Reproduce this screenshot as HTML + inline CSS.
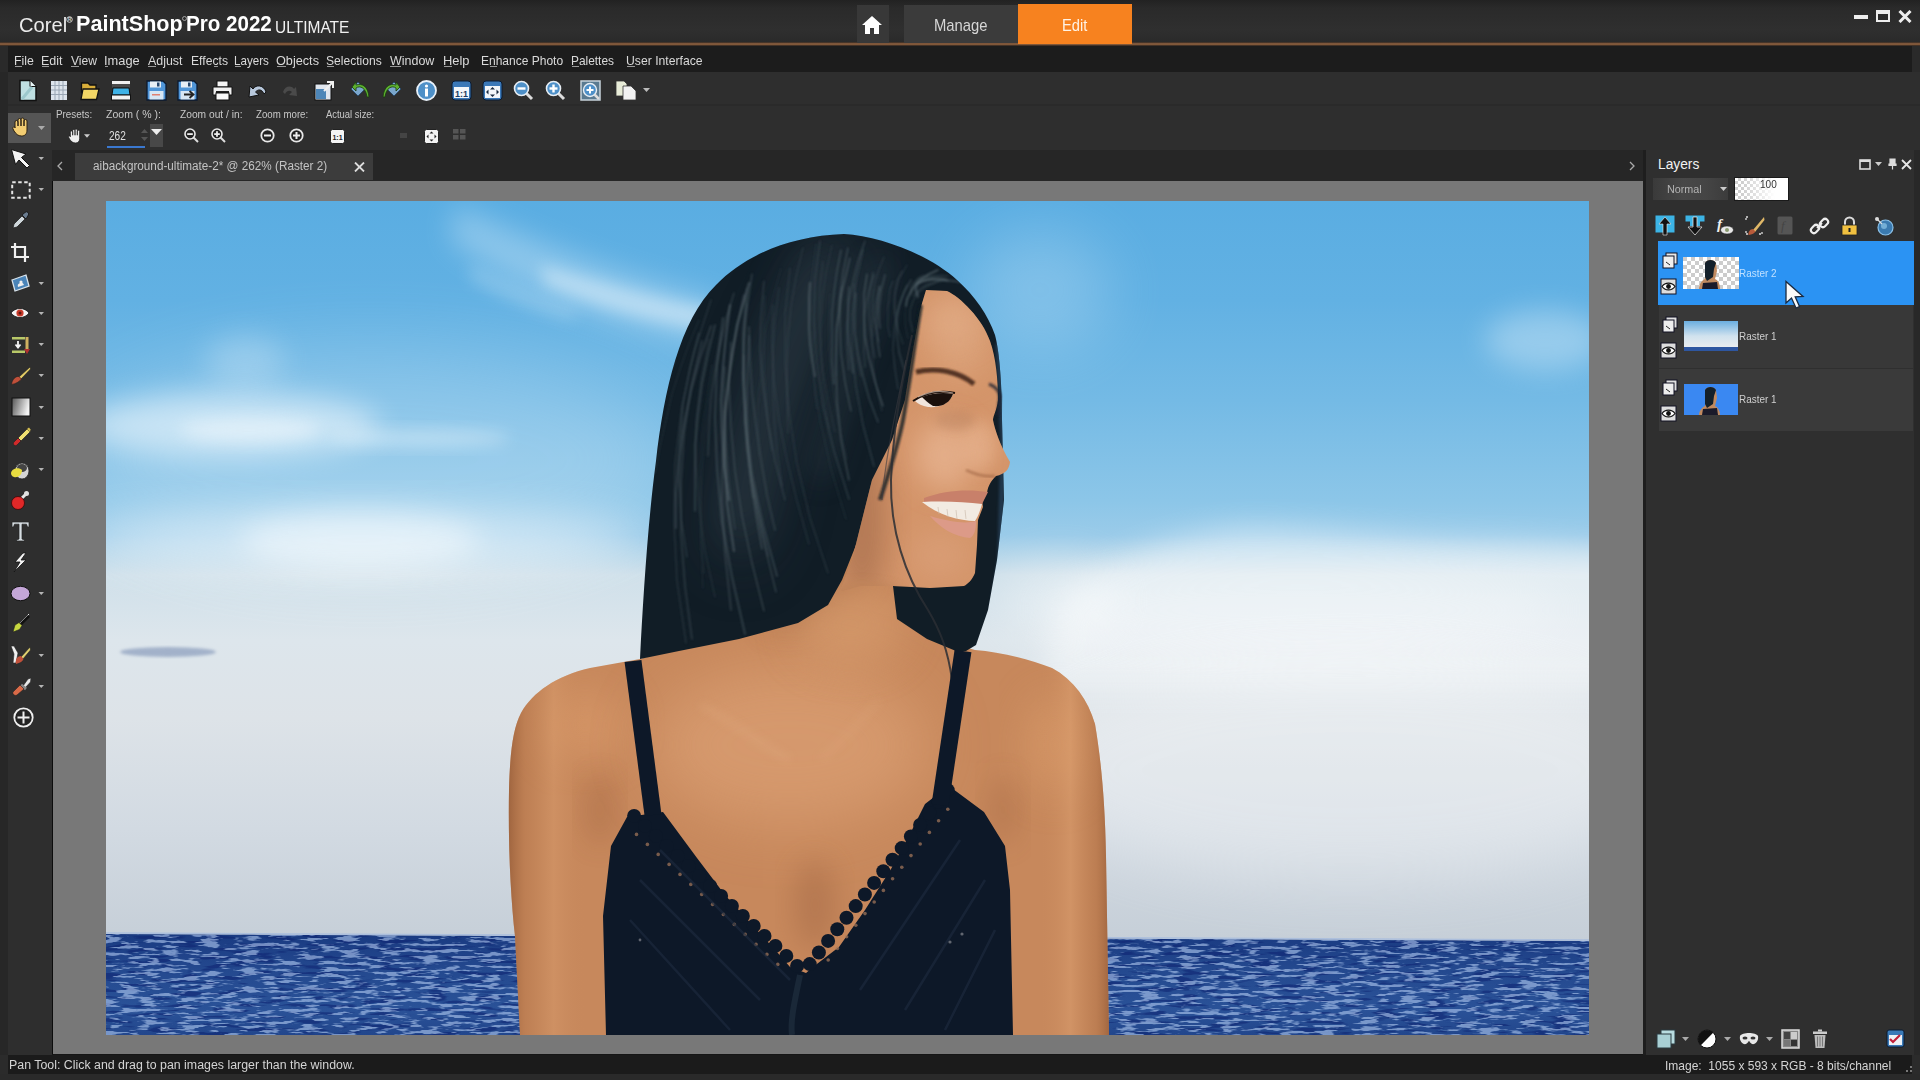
<!DOCTYPE html>
<html><head><meta charset="utf-8">
<style>
*{margin:0;padding:0;box-sizing:border-box}
html,body{width:1920px;height:1080px;overflow:hidden;background:#2b2b2b;font-family:"Liberation Sans",sans-serif;color:#ddd}
.a{position:absolute}
.t{position:absolute;white-space:pre;line-height:normal;transform-origin:0 0;font-family:"Liberation Sans",sans-serif}
#title{left:0;top:0;width:1920px;height:42px;background:linear-gradient(#222 0,#2a2a2a 8px,#2f2f2f 30px,#2a2a2a 42px)}
#oline{left:0;top:42px;width:1920px;height:4px;background:linear-gradient(#2a2420,#8e6040 45%,#7e5638 65%,#241e1c)}
#menu{left:0;top:46px;width:1920px;height:26px;background:#2a2a2a}
#menuin{left:8px;top:46px;width:1904px;height:26px;background:#1c1c1c}
#tb{left:0;top:72px;width:1920px;height:78px;background:#2e2e2e}
#tbsep{left:0;top:104px;width:1920px;height:2px;background:#2a2a2a}
#tools{left:0;top:106px;width:52px;height:949px;background:#2e2e2e}
#tabbar{left:52px;top:150px;width:1592px;height:32px;background:#262626}
#tab{left:75px;top:153px;width:298px;height:27px;background:#3c3c3c}
#canvas{left:52px;top:181px;width:1591px;height:874px;background:#787878;border-left:1px solid #0c0c0c}
#cbot{left:52px;top:1054px;width:1591px;height:2px;background:#161616}
#panel{left:1643px;top:150px;width:277px;height:905px;background:#2f2f2f;border-left:3px solid #1e1e1e}
#status{left:8px;top:1055px;width:1904px;height:19px;background:#1b1b1b}
#sbot{left:0;top:1074px;width:1920px;height:6px;background:#2a2a2a}
#photo{left:106px;top:201px;width:1483px;height:834px;overflow:hidden}

</style></head><body>
<div class="a" id="title"></div>
<div class="a" id="oline"></div>
<div class="a" id="menu"></div>
<div class="a" id="menuin"></div>
<div class="a" id="tb"></div>
<div class="a" id="tbsep"></div>
<div class="a" id="tools"></div>
<div class="a" id="tabbar"></div>
<div class="a" id="tab"></div>
<div class="a" id="canvas"></div>
<div class="a" id="cbot"></div>
<div class="a" id="panel"></div>
<div class="a" id="status"></div>
<div class="a" id="sbot"></div>
<div class="a" id="photo"><svg width="1483" height="834" viewBox="106 201 1483 834">
<defs>
<linearGradient id="sky" x1="0" y1="201" x2="0" y2="940" gradientUnits="userSpaceOnUse">
<stop offset="0" stop-color="#5aade2"/>
<stop offset="0.134" stop-color="#62b1e3"/>
<stop offset="0.27" stop-color="#74bae5"/>
<stop offset="0.405" stop-color="#8cc6e8"/>
<stop offset="0.452" stop-color="#9acbe9"/>
<stop offset="0.506" stop-color="#cfe0ea"/>
<stop offset="0.594" stop-color="#dde6ec"/>
<stop offset="0.7" stop-color="#dde3e8"/>
<stop offset="0.85" stop-color="#d2dae2"/>
<stop offset="1" stop-color="#c6cfd8"/>
</linearGradient>
<linearGradient id="seaG" x1="0" y1="935" x2="0" y2="1035" gradientUnits="userSpaceOnUse">
<stop offset="0" stop-color="#1a3b82"/>
<stop offset="0.35" stop-color="#24498f"/>
<stop offset="0.75" stop-color="#2a5298"/>
<stop offset="1" stop-color="#22468c"/>
</linearGradient>
<filter id="b4" x="-50%" y="-50%" width="200%" height="200%"><feGaussianBlur stdDeviation="4"/></filter>
<filter id="b8" x="-50%" y="-50%" width="200%" height="200%"><feGaussianBlur stdDeviation="8"/></filter>
<filter id="b14" x="-50%" y="-50%" width="200%" height="200%"><feGaussianBlur stdDeviation="14"/></filter>
<filter id="b20" x="-50%" y="-50%" width="200%" height="200%"><feGaussianBlur stdDeviation="20"/></filter>
<filter id="b40" x="-50%" y="-50%" width="200%" height="200%"><feGaussianBlur stdDeviation="40"/></filter>
<filter id="b30" x="-50%" y="-50%" width="200%" height="200%"><feGaussianBlur stdDeviation="30"/></filter>
<filter id="b2" x="-20%" y="-20%" width="140%" height="140%"><feGaussianBlur stdDeviation="1.5"/></filter>
<filter id="b1" x="-20%" y="-20%" width="140%" height="140%"><feGaussianBlur stdDeviation="0.8"/></filter>
<filter id="waves" x="0" y="0" width="100%" height="100%" color-interpolation-filters="sRGB">
<feTurbulence type="fractalNoise" baseFrequency="0.05 0.32" numOctaves="3" seed="7" result="n"/>
<feColorMatrix in="n" type="matrix" values="0 0 0 0 0.7  0 0 0 0 0.8  0 0 0 0 0.95  0 0 0 8 -4.1"/>
</filter>
<filter id="waves2" x="0" y="0" width="100%" height="100%" color-interpolation-filters="sRGB">
<feTurbulence type="fractalNoise" baseFrequency="0.04 0.25" numOctaves="2" seed="11" result="n"/>
<feColorMatrix in="n" type="matrix" values="0 0 0 0 0.06  0 0 0 0 0.15  0 0 0 0 0.45  -8 0 0 0 3.7"/>
</filter>
<filter id="hairtex" x="0" y="0" width="100%" height="100%">
<feTurbulence type="fractalNoise" baseFrequency="0.25 0.012" numOctaves="2" seed="3" result="n"/>
<feColorMatrix in="n" type="matrix" values="0 0 0 0 0.45  0 0 0 0 0.52  0 0 0 0 0.56  0 0 0 5 -2.6"/>
</filter>
<clipPath id="skinClip"><path d="M520,1035 L515,936 C511,900 508,850 509,790 C510,752 513,728 521,713 C533,692 556,676 590,668 L640,659 L740,630 L850,540 L900,540 L900,600 L940,640 L975,650 C1000,652 1030,659 1052,668 C1074,680 1088,700 1095,724 C1101,760 1105,800 1106,856 L1109,1035 Z"/></clipPath>
<clipPath id="hairClip"><path d="M844,234 C880,236 930,255 957,280 C975,296 988,315 995,335 C999,350 1002,380 1002,420 L1004,500 L997,560 L988,610 L976,645 L966,651 L956,651 L927,639 L897,619 L893,586 L856,545 L842,580 L828,605 L798,623 L739,639 L679,651 L640,659 C643,600 648,520 656,461 C664,390 680,320 716,285 C745,255 790,236 844,234 Z"/></clipPath>
<clipPath id="faceClip"><path d="M926,290 L947,291 C960,297 982,318 990,341 C996,358 998,380 998,400 C997,410 993,416 993,420 C995,430 1000,445 1010,462 C1009,470 1005,474 996,476 C992,480 988,485 987,493 L982,500 L983,507 L978,520 L977,545 L975,573 C972,580 968,584 964,586 L930,588 L893,586 L860,586 L840,592 L852,560 L862,520 L872,480 L892,440 L905,400 L913,350 L920,310 Z"/></clipPath>
<clipPath id="topClip"><path d="M611,846 L627,817 L663,812 L697,858 L725,895 L756,929 L777,952 L790,967 L806,973 L813,967 L839,947 L865,910 L891,869 L912,830 L925,804 L938,794 L953,789 L984,812 L1005,846 L1010,890 L1013,1035 L606,1035 L603,916 Z"/></clipPath>
<linearGradient id="hmg" x1="0" y1="180" x2="0" y2="740" gradientUnits="userSpaceOnUse"><stop offset="0" stop-color="#fff"/><stop offset="0.45" stop-color="#fff"/><stop offset="0.8" stop-color="#444"/><stop offset="1" stop-color="#222"/></linearGradient>
<mask id="hairMask" maskUnits="userSpaceOnUse" x="500" y="150" width="640" height="640"><rect x="500" y="150" width="640" height="640" fill="url(#hmg)"/></mask>
<linearGradient id="armLG" x1="506" y1="0" x2="612" y2="0" gradientUnits="userSpaceOnUse"><stop offset="0" stop-color="#8a5230" stop-opacity="0.75"/><stop offset="0.18" stop-color="#a86a40" stop-opacity="0.3"/><stop offset="0.45" stop-color="#dca070" stop-opacity="0.35"/><stop offset="0.75" stop-color="#c8885a" stop-opacity="0"/><stop offset="1" stop-color="#9a6040" stop-opacity="0"/></linearGradient>
<linearGradient id="armRG" x1="1008" y1="0" x2="1112" y2="0" gradientUnits="userSpaceOnUse"><stop offset="0" stop-color="#9a6040" stop-opacity="0"/><stop offset="0.3" stop-color="#c8885a" stop-opacity="0"/><stop offset="0.6" stop-color="#e0a474" stop-opacity="0.4"/><stop offset="0.85" stop-color="#a86a40" stop-opacity="0.35"/><stop offset="1" stop-color="#8a5230" stop-opacity="0.75"/></linearGradient>
<clipPath id="seaClip"><path d="M106,934 L1589,941 L1589,1035 L106,1035 Z"/></clipPath>
<clipPath id="photoClip"><rect x="106" y="201" width="1483" height="834"/></clipPath>
</defs>
<rect x="106" y="201" width="1483" height="834" fill="url(#sky)"/>
<!-- clouds -->
<g fill="#ffffff">
<path d="M455,205 C520,235 600,270 720,300 L715,345 C620,330 530,300 450,240 Z" opacity="0.28" filter="url(#b14)"/>
<path d="M540,265 C600,282 660,300 720,310 L712,330 C650,322 590,305 545,285 Z" opacity="0.38" filter="url(#b8)"/><path d="M470,265 C510,285 550,300 580,312 L570,320 C530,310 495,295 470,280 Z" opacity="0.2" filter="url(#b8)"/>
<ellipse cx="370" cy="460" rx="300" ry="110" opacity="0.18" filter="url(#b40)"/>
<ellipse cx="230" cy="425" rx="150" ry="32" opacity="0.5" filter="url(#b14)"/>
<ellipse cx="360" cy="540" rx="120" ry="28" opacity="0.45" filter="url(#b14)"/>
<ellipse cx="250" cy="430" rx="70" ry="12" opacity="0.4" filter="url(#b8)"/>
<ellipse cx="420" cy="438" rx="90" ry="9" opacity="0.35" filter="url(#b8)"/>
<ellipse cx="245" cy="360" rx="40" ry="25" opacity="0.22" filter="url(#b14)"/>
<ellipse cx="1040" cy="290" rx="70" ry="60" opacity="0.2" filter="url(#b30)"/>
<ellipse cx="1545" cy="340" rx="60" ry="30" opacity="0.3" filter="url(#b14)"/>
<path d="M1060,600 C1100,560 1170,532 1250,526 C1330,528 1400,538 1470,540 C1520,540 1560,545 1620,548 L1620,690 L1040,690 Z" opacity="0.42" filter="url(#b14)"/>
<ellipse cx="1300" cy="610" rx="260" ry="40" opacity="0.25" filter="url(#b20)"/>
<ellipse cx="360" cy="540" rx="280" ry="30" opacity="0.45" filter="url(#b20)"/>
<ellipse cx="1060" cy="600" rx="60" ry="40" opacity="0.3" filter="url(#b20)"/>
</g>

<ellipse cx="1350" cy="770" rx="320" ry="110" fill="#fff" opacity="0.3" filter="url(#b30)"/>
<ellipse cx="168" cy="652" rx="48" ry="5" fill="#8a9cbc" opacity="0.7" filter="url(#b2)"/>
<!-- sea -->
<path d="M106,934 L1589,941 L1589,1035 L106,1035 Z" fill="url(#seaG)"/>
<path d="M106,934 L1589,941 L1589,1035 L106,1035 Z" fill="#fff" filter="url(#waves2)" opacity="0.6" clip-path="url(#seaClip)"/><path d="M106,934 L1589,941 L1589,1035 L106,1035 Z" fill="#fff" filter="url(#waves)" opacity="0.6" clip-path="url(#seaClip)"/>
<path d="M106,933 L1589,940" stroke="#9ab4e0" stroke-width="1.5" opacity="0.6"/>
<!-- skin body -->
<path d="M520,1035 L515,936 C511,900 508,850 509,790 C510,752 513,728 521,713 C533,692 556,676 590,668 L640,659 L740,630 L850,540 L900,540 L900,600 L940,640 L975,650 C1000,652 1030,659 1052,668 C1074,680 1088,700 1095,724 C1101,760 1105,800 1106,856 L1109,1035 Z" fill="#c7885c"/>
<g clip-path="url(#skinClip)">
<ellipse cx="585" cy="725" rx="40" ry="35" fill="#dc9c6c" opacity="0.6" filter="url(#b20)"/>
<ellipse cx="1055" cy="745" rx="28" ry="50" fill="#dc9e6c" opacity="0.6" filter="url(#b20)"/>
<rect x="500" y="600" width="112" height="440" fill="url(#armLG)"/>
<rect x="1008" y="600" width="112" height="440" fill="url(#armRG)"/>
<path d="M850,545 L760,628 L800,630 L870,580 Z" fill="#9a6440" opacity="0.4" filter="url(#b14)"/>
<ellipse cx="790" cy="745" rx="140" ry="80" fill="#dca074" opacity="0.7" filter="url(#b30)"/><ellipse cx="850" cy="625" rx="55" ry="40" fill="#d89e70" opacity="0.6" filter="url(#b20)"/>
<ellipse cx="600" cy="810" rx="14" ry="35" fill="#8a5030" opacity="0.28" filter="url(#b14)"/>
<ellipse cx="1003" cy="810" rx="14" ry="35" fill="#8a5030" opacity="0.25" filter="url(#b14)"/>
<path d="M700,705 C735,722 760,745 790,760" stroke="#e8b890" stroke-width="8" opacity="0.18" filter="url(#b4)" fill="none"/>
<path d="M880,700 C860,720 840,745 820,760" stroke="#e8b890" stroke-width="8" opacity="0.12" filter="url(#b4)" fill="none"/>
<ellipse cx="815" cy="905" rx="20" ry="45" fill="#9a6040" opacity="0.4" filter="url(#b14)"/>
</g>
<!-- hair -->
<path d="M844,234 C880,236 930,255 957,280 C975,296 988,315 995,335 C999,350 1002,380 1002,420 L1004,500 L997,560 L988,610 L976,645 L966,651 L956,651 L927,639 L897,619 L893,586 L856,545 L842,580 L828,605 L798,623 L739,639 L679,651 L640,659 C643,600 648,520 656,461 C664,390 680,320 716,285 C745,255 790,236 844,234 Z" fill="#111d26"/>
<g clip-path="url(#hairClip)" fill="none" stroke-linecap="round">
<path d="M820,260 C790,330 760,420 740,520" stroke="#3a4a52" stroke-width="40" opacity="0.35" filter="url(#b20)"/>
<path d="M880,270 C860,330 840,400 820,470" stroke="#3a4a52" stroke-width="25" opacity="0.3" filter="url(#b14)"/>
<path d="M850,260 C800,320 760,420 740,540" stroke="#3a4a54" stroke-width="60" opacity="0.3" filter="url(#b30)" fill="none"/>
<g filter="url(#b1)"><path d="M856,293 L855,313 L855,333 L858,354 L863,376 L869,398 L878,422" stroke="#4a5a62" stroke-width="1.6" opacity="0.52"/><path d="M744,295 L734,343 L727,394 L723,445 L722,499 L725,553 L731,610" stroke="#6a7a80" stroke-width="2" opacity="0.29"/><path d="M752,274 L745,322 L743,373 L745,425 L751,479 L762,534 L776,592" stroke="#6a7a80" stroke-width="1" opacity="0.52"/><path d="M711,300 L694,352 L682,406 L675,463 L674,521 L677,581 L686,643" stroke="#4a5a62" stroke-width="1" opacity="0.52"/><path d="M948,280 L940,281 L933,283 L926,285 L921,288 L917,292 L914,296" stroke="#5a6a72" stroke-width="1" opacity="0.58"/><path d="M884,257 L879,269 L875,282 L873,296 L873,311 L875,326 L879,342" stroke="#5a6a72" stroke-width="1" opacity="0.34"/><path d="M773,305 L772,343 L774,381 L779,420 L787,460 L797,501 L809,544" stroke="#4a5a62" stroke-width="1.2" opacity="0.37"/><path d="M765,296 L764,321 L764,346 L764,372 L766,398 L768,424 L772,451" stroke="#3a4a52" stroke-width="0.8" opacity="0.58"/><path d="M779,288 L775,319 L773,351 L773,384 L774,417 L777,451 L782,486" stroke="#4a5a62" stroke-width="1.6" opacity="0.27"/><path d="M731,342 L729,384 L731,427 L735,471 L742,516 L752,563 L764,611" stroke="#6a7a80" stroke-width="1.2" opacity="0.43"/><path d="M928,277 L919,284 L912,293 L907,302 L905,313 L905,325 L908,338" stroke="#3a4a52" stroke-width="1.2" opacity="0.26"/><path d="M937,282 L926,287 L918,293 L913,301 L910,310 L910,320 L913,332" stroke="#3a4a52" stroke-width="1.2" opacity="0.57"/><path d="M841,250 L837,271 L834,292 L832,314 L832,337 L832,360 L834,384" stroke="#5a6a72" stroke-width="1.2" opacity="0.60"/><path d="M711,326 L700,358 L691,391 L684,424 L679,458 L676,493 L676,528" stroke="#5a6a72" stroke-width="2" opacity="0.37"/><path d="M744,355 L744,385 L745,417 L747,449 L751,481 L756,515 L762,549" stroke="#6a7a80" stroke-width="1.2" opacity="0.54"/><path d="M709,339 L701,379 L696,421 L696,463 L699,507 L705,551 L715,597" stroke="#4a5a62" stroke-width="1" opacity="0.40"/><path d="M723,318 L717,366 L715,417 L717,468 L722,522 L732,577 L745,634" stroke="#5a6a72" stroke-width="2" opacity="0.41"/><path d="M823,261 L820,287 L819,315 L820,343 L823,371 L828,401 L835,432" stroke="#5a6a72" stroke-width="0.8" opacity="0.38"/><path d="M948,281 L940,280 L933,280 L927,281 L923,282 L919,283 L917,286" stroke="#4a5a62" stroke-width="1.6" opacity="0.35"/><path d="M902,271 L897,281 L895,291 L894,303 L895,316 L898,329 L903,344" stroke="#4a5a62" stroke-width="1.2" opacity="0.38"/><path d="M879,286 L875,305 L872,325 L872,345 L873,366 L877,389 L882,411" stroke="#3a4a52" stroke-width="1.2" opacity="0.48"/><path d="M850,258 L842,292 L837,327 L836,363 L837,401 L841,440 L849,480" stroke="#6a7a80" stroke-width="1.2" opacity="0.54"/><path d="M867,274 L864,294 L864,314 L865,336 L869,358 L875,382 L883,406" stroke="#6a7a80" stroke-width="1.2" opacity="0.57"/><path d="M730,305 L726,336 L723,367 L721,400 L722,432 L724,466 L729,500" stroke="#5a6a72" stroke-width="2" opacity="0.59"/><path d="M734,293 L726,319 L720,346 L715,373 L711,400 L709,428 L708,456" stroke="#6a7a80" stroke-width="1" opacity="0.47"/><path d="M944,275 L934,275 L925,277 L919,279 L914,283 L912,287 L912,293" stroke="#3a4a52" stroke-width="0.8" opacity="0.32"/><path d="M849,287 L848,301 L848,315 L848,329 L849,343 L851,358 L853,373" stroke="#4a5a62" stroke-width="1.6" opacity="0.59"/><path d="M725,367 L724,393 L724,419 L726,446 L728,473 L731,501 L735,529" stroke="#4a5a62" stroke-width="1.6" opacity="0.41"/><path d="M790,268 L785,314 L785,362 L789,412 L797,464 L810,518 L828,573" stroke="#4a5a62" stroke-width="1.2" opacity="0.39"/><path d="M749,336 L748,362 L747,388 L747,415 L748,442 L750,470 L753,497" stroke="#4a5a62" stroke-width="2" opacity="0.46"/><path d="M702,341 L691,387 L684,434 L681,483 L681,534 L685,586 L692,639" stroke="#5a6a72" stroke-width="1.6" opacity="0.39"/><path d="M848,248 L843,273 L840,299 L840,325 L841,353 L845,382 L851,411" stroke="#6a7a80" stroke-width="1" opacity="0.59"/><path d="M865,241 L858,261 L853,281 L849,302 L847,324 L847,347 L849,370" stroke="#5a6a72" stroke-width="1.2" opacity="0.47"/><path d="M938,270 L929,274 L921,279 L915,285 L911,291 L907,299 L906,306" stroke="#6a7a80" stroke-width="1.6" opacity="0.59"/><path d="M924,275 L919,277 L916,280 L913,283 L911,286 L911,290 L911,295" stroke="#6a7a80" stroke-width="0.8" opacity="0.36"/><path d="M948,281 L941,280 L935,280 L930,280 L926,280 L922,281 L920,283" stroke="#6a7a80" stroke-width="1" opacity="0.35"/><path d="M907,265 L903,272 L899,279 L897,287 L895,296 L895,305 L895,314" stroke="#6a7a80" stroke-width="0.8" opacity="0.34"/><path d="M749,283 L737,325 L730,368 L725,412 L725,457 L727,503 L734,551" stroke="#6a7a80" stroke-width="2" opacity="0.48"/><path d="M854,284 L854,298 L853,313 L854,328 L856,344 L858,360 L861,376" stroke="#3a4a52" stroke-width="2" opacity="0.35"/><path d="M830,294 L829,320 L829,346 L831,373 L835,401 L840,430 L847,459" stroke="#4a5a62" stroke-width="0.8" opacity="0.34"/><path d="M810,283 L809,298 L809,313 L809,328 L810,344 L812,360 L815,376" stroke="#6a7a80" stroke-width="2" opacity="0.45"/><path d="M880,286 L878,297 L877,308 L876,320 L877,332 L878,344 L880,357" stroke="#6a7a80" stroke-width="1" opacity="0.56"/><path d="M820,241 L815,279 L814,320 L817,362 L823,406 L834,451 L849,499" stroke="#3a4a52" stroke-width="1.6" opacity="0.57"/><path d="M715,325 L708,354 L702,384 L698,415 L695,446 L695,478 L695,511" stroke="#5a6a72" stroke-width="1.6" opacity="0.46"/><path d="M907,285 L901,300 L896,316 L894,333 L893,350 L895,369 L898,389" stroke="#4a5a62" stroke-width="1.2" opacity="0.50"/><path d="M961,282 L945,280 L932,279 L923,281 L917,284 L916,289 L918,296" stroke="#5a6a72" stroke-width="2" opacity="0.48"/><path d="M948,276 L935,276 L925,277 L918,279 L915,284 L915,290 L918,298" stroke="#5a6a72" stroke-width="1" opacity="0.46"/><path d="M803,248 L796,277 L791,307 L788,338 L787,369 L787,401 L788,433" stroke="#6a7a80" stroke-width="0.8" opacity="0.35"/><path d="M841,287 L839,301 L838,315 L836,330 L836,345 L836,360 L836,376" stroke="#4a5a62" stroke-width="1.2" opacity="0.49"/><path d="M814,318 L814,333 L813,347 L814,363 L814,378 L815,393 L817,409" stroke="#3a4a52" stroke-width="1" opacity="0.45"/><path d="M874,275 L869,290 L866,304 L864,319 L864,335 L864,351 L865,367" stroke="#4a5a62" stroke-width="2" opacity="0.33"/><path d="M911,280 L904,292 L899,306 L897,320 L897,335 L899,352 L904,369" stroke="#6a7a80" stroke-width="1.6" opacity="0.31"/><path d="M885,275 L883,283 L881,291 L880,300 L879,309 L879,319 L880,328" stroke="#4a5a62" stroke-width="2" opacity="0.46"/><path d="M747,289 L743,333 L743,379 L746,426 L752,475 L763,525 L777,576" stroke="#4a5a62" stroke-width="2" opacity="0.50"/><path d="M675,360 L666,383 L657,407 L650,432 L644,456 L640,481 L636,507" stroke="#4a5a62" stroke-width="0.8" opacity="0.59"/><path d="M873,272 L871,285 L869,299 L869,313 L870,327 L872,342 L875,358" stroke="#5a6a72" stroke-width="1.2" opacity="0.37"/><path d="M863,250 L856,281 L852,315 L852,350 L856,387 L863,425 L874,466" stroke="#3a4a52" stroke-width="1.6" opacity="0.59"/><path d="M781,268 L773,298 L766,328 L762,359 L759,391 L758,423 L759,456" stroke="#4a5a62" stroke-width="0.8" opacity="0.26"/><path d="M712,365 L707,398 L702,431 L700,466 L700,501 L701,537 L704,573" stroke="#3a4a52" stroke-width="0.8" opacity="0.40"/><path d="M764,281 L761,315 L760,350 L763,386 L768,423 L775,461 L785,500" stroke="#5a6a72" stroke-width="1" opacity="0.48"/><path d="M699,333 L690,368 L683,404 L680,441 L679,479 L681,518 L687,557" stroke="#4a5a62" stroke-width="1.2" opacity="0.54"/><path d="M893,281 L890,289 L889,298 L888,307 L888,317 L888,327 L890,337" stroke="#3a4a52" stroke-width="1.2" opacity="0.58"/><path d="M874,289 L873,296 L872,304 L872,312 L872,320 L872,328 L873,336" stroke="#3a4a52" stroke-width="1.2" opacity="0.41"/><path d="M749,327 L750,359 L752,392 L756,425 L761,460 L767,495 L775,530" stroke="#4a5a62" stroke-width="2" opacity="0.39"/><path d="M946,279 L939,278 L932,278 L926,279 L922,280 L919,282 L917,284" stroke="#6a7a80" stroke-width="1" opacity="0.52"/><path d="M721,331 L713,372 L707,413 L703,455 L701,498 L701,542 L703,588" stroke="#3a4a52" stroke-width="0.8" opacity="0.41"/><path d="M816,244 L811,285 L810,328 L813,373 L820,420 L831,469 L846,519" stroke="#3a4a52" stroke-width="0.8" opacity="0.50"/><path d="M747,304 L744,343 L744,384 L747,425 L751,468 L758,511 L768,556" stroke="#4a5a62" stroke-width="1.6" opacity="0.39"/><path d="M699,320 L689,344 L680,369 L672,394 L666,420 L660,446 L655,473" stroke="#4a5a62" stroke-width="1" opacity="0.31"/><path d="M832,245 L826,273 L822,302 L821,332 L821,363 L824,395 L829,428" stroke="#4a5a62" stroke-width="0.8" opacity="0.44"/></g>
<path d="M998,345 L1003,440 L1000,560 L988,640" stroke="#35587a" stroke-width="5" opacity="0.5" filter="url(#b2)"/>
</g>
<!-- face -->
<path d="M926,290 L947,291 C960,297 982,318 990,341 C996,358 998,380 998,400 C997,410 993,416 993,420 C995,430 1000,445 1010,462 C1009,470 1005,474 996,476 C992,480 988,485 987,493 L982,500 L983,507 L978,520 L977,545 L975,573 C972,580 968,584 964,586 L930,588 L893,586 L860,586 L840,592 L852,560 L862,520 L872,480 L892,440 L905,400 L913,350 L920,310 Z" fill="#d4956a"/>
<g clip-path="url(#faceClip)">
<ellipse cx="960" cy="340" rx="30" ry="40" fill="#e0aa84" opacity="0.55" filter="url(#b14)"/>
<ellipse cx="980" cy="445" rx="18" ry="25" fill="#e8b490" opacity="0.6" filter="url(#b8)"/>
<ellipse cx="862" cy="520" rx="25" ry="80" fill="#9a6444" opacity="0.55" filter="url(#b14)"/><ellipse cx="945" cy="455" rx="30" ry="35" fill="#eab896" opacity="0.7" filter="url(#b14)"/><ellipse cx="950" cy="320" rx="30" ry="25" fill="#e4b08c" opacity="0.5" filter="url(#b14)"/>
<ellipse cx="940" cy="555" rx="30" ry="25" fill="#dea682" opacity="0.45" filter="url(#b14)"/>
<ellipse cx="955" cy="420" rx="20" ry="10" fill="#b07a5a" opacity="0.3" filter="url(#b4)"/><ellipse cx="862" cy="592" rx="40" ry="10" fill="#bf845a" opacity="0.9" filter="url(#b4)"/>
</g>
<!-- brow, eye -->
<path d="M916,372 C935,367 958,371 974,384" stroke="#3e2216" stroke-width="5" fill="none" opacity="0.85" filter="url(#b1)"/>
<path d="M915,401 C925,394 940,391 953,394 C950,403 940,408 928,407 C922,406 918,404 915,401 Z" fill="#f0e4dc"/><path d="M922,397 C932,393 944,392 953,394 C950,403 942,407 933,406 C928,403 925,400 922,397 Z" fill="#1a100c"/><path d="M913,401 C925,393 940,390 955,393" stroke="#1a100c" stroke-width="2" fill="none"/>
<path d="M918,397 C930,391 942,390 953,393" stroke="#f0d8c8" stroke-width="1.2" opacity="0.6" fill="none"/>
<path d="M989,384 C994,386 999,390 1000,396 L998,416" stroke="#1e2430" stroke-width="3.5" fill="none" opacity="0.75" filter="url(#b1)"/>
<!-- nose -->
<path d="M966,470 C976,475 986,477 995,476" stroke="#9a6040" stroke-width="3" fill="none" opacity="0.55" filter="url(#b1)"/>
<!-- mouth -->
<path d="M924,498 C945,490 968,489 988,492 C985,498 983,502 982,504 C960,502 940,503 924,503 Z" fill="#c8806a"/>
<path d="M922,502 C945,501 965,502 982,504 C980,512 977,518 975,521 C960,521 938,515 922,502 Z" fill="#f2ebe2"/>
<path d="M930,516 C950,522 966,524 976,521 C976,530 974,536 970,538 C955,537 940,528 930,516 Z" fill="#dc9a88"/>
<path d="M938,507 L939,514 M947,509 L948,517 M956,510 L957,519 M965,510 L966,519" stroke="#c8b8a8" stroke-width="1" opacity="0.6"/>
<!-- hair strands over face -->
<path d="M921,305 C915,340 910,380 903,420 C897,450 888,475 880,500" stroke="#101c24" stroke-width="4" fill="none" opacity="0.8" filter="url(#b1)"/>
<path d="M912,335 C902,380 893,430 891,480 C890,530 905,575 928,610 C940,630 948,650 952,680" stroke="#2a2e34" stroke-width="2" fill="none" opacity="0.85"/>
<path d="M906,360 C896,410 885,460 882,500" stroke="#3a3a40" stroke-width="1.2" fill="none" opacity="0.6"/>
<!-- top -->
<path d="M611,846 L627,817 L663,812 L697,858 L725,895 L756,929 L777,952 L790,967 L806,973 L813,967 L839,947 L865,910 L891,869 L912,830 L925,804 L938,794 L953,789 L984,812 L1005,846 L1010,890 L1013,1035 L606,1035 L603,916 Z" fill="#0d1828"/>
<g fill="#0d1828"><circle cx="634.1" cy="815.9" r="7"/><circle cx="645.0" cy="825.9" r="7"/><circle cx="655.9" cy="835.9" r="7"/><circle cx="666.7" cy="845.9" r="7"/><circle cx="677.6" cy="855.9" r="7"/><circle cx="688.5" cy="865.9" r="7"/><circle cx="699.3" cy="875.9" r="7"/><circle cx="710.2" cy="885.9" r="7"/><circle cx="721.1" cy="895.9" r="7"/><circle cx="731.9" cy="905.9" r="7"/><circle cx="742.8" cy="915.9" r="7"/><circle cx="753.7" cy="925.9" r="7"/><circle cx="764.5" cy="935.9" r="7"/><circle cx="775.4" cy="945.9" r="7"/><circle cx="786.3" cy="955.9" r="7"/><circle cx="797.1" cy="965.9" r="7"/><circle cx="947.7" cy="790.1" r="7"/><circle cx="938.5" cy="801.7" r="7"/><circle cx="929.3" cy="813.3" r="7"/><circle cx="920.1" cy="824.9" r="7"/><circle cx="910.9" cy="836.5" r="7"/><circle cx="901.7" cy="848.1" r="7"/><circle cx="892.5" cy="859.7" r="7"/><circle cx="883.3" cy="871.3" r="7"/><circle cx="874.1" cy="882.9" r="7"/><circle cx="864.9" cy="894.5" r="7"/><circle cx="855.7" cy="906.1" r="7"/><circle cx="846.5" cy="917.7" r="7"/><circle cx="837.3" cy="929.3" r="7"/><circle cx="828.1" cy="940.9" r="7"/><circle cx="818.9" cy="952.5" r="7"/><circle cx="809.7" cy="964.1" r="7"/></g><g fill="#a87a5c" opacity="0.7"><circle cx="636.5" cy="834.4" r="1.8"/><circle cx="647.4" cy="844.4" r="1.8"/><circle cx="658.2" cy="854.4" r="1.8"/><circle cx="669.1" cy="864.4" r="1.8"/><circle cx="680.0" cy="874.4" r="1.8"/><circle cx="690.8" cy="884.4" r="1.8"/><circle cx="701.7" cy="894.4" r="1.8"/><circle cx="712.6" cy="904.4" r="1.8"/><circle cx="723.4" cy="914.4" r="1.8"/><circle cx="734.3" cy="924.4" r="1.8"/><circle cx="745.2" cy="934.4" r="1.8"/><circle cx="756.0" cy="944.4" r="1.8"/><circle cx="766.9" cy="954.4" r="1.8"/><circle cx="777.8" cy="964.4" r="1.8"/><circle cx="947.8" cy="809.2" r="1.8"/><circle cx="938.6" cy="820.8" r="1.8"/><circle cx="929.4" cy="832.4" r="1.8"/><circle cx="920.2" cy="844.0" r="1.8"/><circle cx="911.0" cy="855.6" r="1.8"/><circle cx="901.8" cy="867.2" r="1.8"/><circle cx="892.6" cy="878.8" r="1.8"/><circle cx="883.4" cy="890.4" r="1.8"/><circle cx="874.2" cy="902.0" r="1.8"/><circle cx="865.0" cy="913.6" r="1.8"/><circle cx="855.8" cy="925.2" r="1.8"/><circle cx="846.6" cy="936.8" r="1.8"/><circle cx="837.4" cy="948.4" r="1.8"/><circle cx="828.2" cy="960.0" r="1.8"/></g>
<g clip-path="url(#topClip)" fill="none">
<path d="M640,880 L760,1000 M630,920 L730,1030 M660,850 L790,980" stroke="#1e2c40" stroke-width="2.5" opacity="0.6"/>
<path d="M960,840 L860,990 M985,880 L905,1010 M995,930 L945,1030" stroke="#1e2c40" stroke-width="2.5" opacity="0.6"/>
</g>
<g fill="#9a9aa0" opacity="0.6"><circle cx="962" cy="934" r="1.6"/><circle cx="950" cy="942" r="1.6"/><circle cx="640" cy="940" r="1.4"/></g>
<path d="M633,661 L653,815" stroke="#0d1828" stroke-width="17"/>
<path d="M963,651 L940,805" stroke="#0d1828" stroke-width="17"/>
<path d="M800,975 C795,1000 790,1020 792,1035" stroke="#1a2838" stroke-width="6" fill="none"/>
</svg>
</div>
<!-- top nav tabs -->
<div class="a" style="left:857px;top:5px;width:32px;height:38px;background:#383838"></div>
<div class="a" style="left:904px;top:5px;width:114px;height:38px;background:#3b3b3b"></div>
<div class="a" style="left:1018px;top:4px;width:114px;height:40px;background:#f7821f"></div>
<svg class="a" style="left:861px;top:14px" width="22" height="22" viewBox="0 0 22 22"><path d="M11 2 L21 11 L18 11 L18 20 L13 20 L13 14 L9 14 L9 20 L4 20 L4 11 L1 11 Z" fill="#fff"/></svg>
<!-- window controls -->
<div class="a" style="left:1854px;top:15px;width:14px;height:4px;background:#eee"></div>
<div class="a" style="left:1876px;top:10px;width:14px;height:12px;border:2px solid #eee;border-top-width:4px"></div>
<svg class="a" style="left:1898px;top:10px" width="14" height="13" viewBox="0 0 14 13"><path d="M1.5 1 L12.5 12 M12.5 1 L1.5 12" stroke="#eee" stroke-width="3"/></svg>

<svg class="a" id="reg1" style="left:66px;top:16px" width="7" height="7" viewBox="0 0 7 7"><circle cx="3.5" cy="3.5" r="2.8" fill="none" stroke="#ddd" stroke-width="0.9"/><text x="3.5" y="5.2" font-family="Liberation Sans" font-size="4.5" font-weight="700" text-anchor="middle" fill="#ddd">R</text></svg>
<svg class="a" style="left:182px;top:16px" width="5" height="5" viewBox="0 0 7 7"><circle cx="3.5" cy="3.5" r="2.8" fill="none" stroke="#ccc" stroke-width="1"/></svg>
<!-- toolbar icons -->
<svg class="a" style="left:18px;top:79px" width="20" height="23" viewBox="0 0 20 23"><path d="M2 1.5 H12 L18 7.5 V21.5 H2 Z" fill="#bfe0e2" stroke="#111" stroke-width="1.5"/><path d="M12 1.5 V7.5 H18" fill="#eaf8f8" stroke="#111" stroke-width="1"/><path d="M4 20 L14 8" stroke="#9cc8cc" stroke-width="3"/></svg>
<svg class="a" style="left:50px;top:80px" width="18" height="21" viewBox="0 0 18 21"><rect x="1" y="1" width="16" height="19" fill="#dde4ec"/><path d="M1 5.5H17M1 10H17M1 14.5H17M5 1V20M9 1V20M13 1V20" stroke="#9aa6b4" stroke-width="1"/></svg>
<svg class="a" style="left:80px;top:80px" width="20" height="21" viewBox="0 0 20 21"><path d="M1.5 3 H8 L10 5 H16 V12 H1.5 Z" fill="#d9ae3a" stroke="#111" stroke-width="1.3"/><path d="M1 19.5 L3 9 H19 L16.5 19.5 Z" fill="#f2d665" stroke="#111" stroke-width="1.3"/></svg>
<svg class="a" style="left:110px;top:80px" width="22" height="21" viewBox="0 0 22 21"><rect x="2" y="1" width="18" height="3" fill="#f0f0f0"/><rect x="2" y="4" width="18" height="3.5" fill="#4a4a4a"/><path d="M3 8 H19 L20 15 H2 Z" fill="#3fb2e6" stroke="#111" stroke-width="1"/><rect x="1.5" y="15" width="19" height="5" fill="#f2f2f2" stroke="#111" stroke-width="1"/></svg>
<svg class="a" style="left:146px;top:80px" width="21" height="21" viewBox="0 0 21 21"><path d="M1 1 H17 L20 4 V20 H1 Z" fill="#4f95d8" stroke="#0b1a30" stroke-width="1.3"/><rect x="4" y="1.5" width="11" height="6" fill="#e6eef6"/><rect x="11" y="2.5" width="2.5" height="4" fill="#25466e"/><rect x="3.5" y="11" width="14" height="8.5" fill="#d7e6f4"/><rect x="6" y="14" width="8" height="1.5" fill="#e08070"/></svg>
<svg class="a" style="left:177px;top:80px" width="22" height="21" viewBox="0 0 22 21"><path d="M1 1 H17 L20 4 V20 H1 Z" fill="#4f95d8" stroke="#0b1a30" stroke-width="1.3"/><rect x="4" y="1.5" width="11" height="6" fill="#e6eef6"/><rect x="11" y="2.5" width="2.5" height="4" fill="#25466e"/><rect x="3.5" y="11" width="14" height="8.5" fill="#d7e6f4"/><path d="M7 14.5 H16 M12.5 11 L16.5 14.5 L12.5 18" stroke="#222" stroke-width="1.8" fill="none"/></svg>
<svg class="a" style="left:212px;top:80px" width="21" height="21" viewBox="0 0 21 21"><rect x="5" y="1" width="11" height="6" fill="#f4f4f4" stroke="#111"/><path d="M1 7 H20 V15 H1 Z" fill="#f0f0f0" stroke="#111"/><rect x="4" y="11" width="13" height="2" fill="#222"/><rect x="4" y="13" width="13" height="7" fill="#fafafa" stroke="#111"/></svg>
<svg class="a" style="left:247px;top:82px" width="21" height="18" viewBox="0 0 21 18"><path d="M19 10 C17 3 9 2 6 7 L3 4 L2 15 L12 13 L8.5 10 C11 7 15 7 17 12 Z" fill="#b8c8dc" stroke="#111" stroke-width="1"/></svg>
<svg class="a" style="left:281px;top:82px" width="18" height="18" viewBox="0 0 18 18"><path d="M2 10 C4 4 10 3 13 7 L15 5 L16 14 L8 13 L11 10 C9 8 6 8 4 12 Z" fill="#4a4a4a"/></svg>
<svg class="a" style="left:314px;top:80px" width="21" height="21" viewBox="0 0 21 21"><rect x="1" y="4" width="16" height="16" fill="#e0e6ee" stroke="#111"/><rect x="2" y="9" width="10" height="10" fill="#4d86b8"/><path d="M10 11 L19 2 M13 2 H19 V8" stroke="#f0f0f0" stroke-width="2" fill="none"/></svg>
<svg class="a" style="left:350px;top:80px" width="21" height="21" viewBox="0 0 21 21"><path d="M8 2 L15 9 L8 16 L1 9 Z" fill="#7aa6cc" stroke="#2b4866"/><path d="M6 8 C10 5 16 8 17 17 L19 17 C18 6 12 3 6 5 L6 2 L2 7 L6 11 Z" fill="#5cb030" stroke="#1b3a10" stroke-width="0.8"/></svg>
<svg class="a" style="left:381px;top:80px" width="21" height="21" viewBox="0 0 21 21"><path d="M13 2 L20 9 L13 16 L6 9 Z" fill="#7aa6cc" stroke="#2b4866"/><path d="M15 8 C11 5 5 8 4 17 L2 17 C3 6 9 3 15 5 L15 2 L19 7 L15 11 Z" fill="#5cb030" stroke="#1b3a10" stroke-width="0.8"/></svg>
<svg class="a" style="left:416px;top:80px" width="21" height="21" viewBox="0 0 21 21"><circle cx="10.5" cy="10.5" r="9.5" fill="#4e90c8" stroke="#eaf2fa" stroke-width="1.8"/><circle cx="10.5" cy="6" r="1.6" fill="#fff"/><rect x="9" y="8.5" width="3" height="8" fill="#fff"/></svg>
<svg class="a" style="left:451px;top:80px" width="21" height="21" viewBox="0 0 21 21"><rect x="1" y="1" width="19" height="19" rx="3" fill="#3a78b8" stroke="#0a1a30"/><rect x="3" y="7" width="15" height="11" fill="#f2f6fa"/><text x="10.5" y="16.5" font-family="Liberation Sans" font-weight="700" font-size="9" text-anchor="middle" fill="#1c3a60">1:1</text></svg>
<svg class="a" style="left:482px;top:80px" width="21" height="21" viewBox="0 0 21 21"><rect x="1" y="1" width="19" height="19" rx="3" fill="#3a78b8" stroke="#0a1a30"/><rect x="3" y="6" width="15" height="12" fill="#f2f6fa"/><path d="M10.5 7 L8 9.5 H13 Z M10.5 17 L8 14.5 H13 Z M4 12 L6.5 9.5 V14.5 Z M17 12 L14.5 9.5 V14.5 Z" fill="#1a2a40"/></svg>
<svg class="a" style="left:513px;top:80px" width="21" height="21" viewBox="0 0 21 21"><path d="M13 13 L19 19" stroke="#ddd" stroke-width="3"/><circle cx="8.5" cy="8.5" r="7" fill="#4e90c8" stroke="#e8eef4" stroke-width="1.6"/><rect x="4.5" y="7.3" width="8" height="2.4" fill="#fff"/></svg>
<svg class="a" style="left:545px;top:80px" width="21" height="21" viewBox="0 0 21 21"><path d="M13 13 L19 19" stroke="#ddd" stroke-width="3"/><circle cx="8.5" cy="8.5" r="7" fill="#4e90c8" stroke="#e8eef4" stroke-width="1.6"/><rect x="4.5" y="7.3" width="8" height="2.4" fill="#fff"/><rect x="7.3" y="4.5" width="2.4" height="8" fill="#fff"/></svg>
<svg class="a" style="left:580px;top:80px" width="21" height="21" viewBox="0 0 21 21"><rect x="1" y="1" width="19" height="19" fill="#5a7a90" stroke="#c8d4dc" stroke-width="1.5"/><circle cx="10" cy="10" r="6.5" fill="#4e90c8" stroke="#e8eef4" stroke-width="1.4"/><rect x="6.5" y="9" width="7" height="2" fill="#fff"/><rect x="9" y="6.5" width="2" height="7" fill="#fff"/><path d="M14.5 14.5 L19 19" stroke="#ddd" stroke-width="2.5"/></svg>
<svg class="a" style="left:615px;top:80px" width="22" height="21" viewBox="0 0 22 21"><path d="M1 1 H9 L12 4 V16 H1 Z" fill="#e8ecd8" stroke="#333" stroke-width="0.8"/><path d="M8 6 H16 L21 11 V20 H8 Z" fill="#f2f2f2" stroke="#333" stroke-width="0.8"/></svg>
<svg class="a" style="left:643px;top:88px" width="7" height="4" viewBox="0 0 7 4"><path d="M0 0H7L3.5 4Z" fill="#bbb"/></svg>
<!-- tool options row -->
<div class="a" style="left:8px;top:113px;width:43px;height:30px;background:#555555"></div>
<svg class="a" style="left:12px;top:117px" width="18" height="20" viewBox="0 0 18 20"><path d="M3 11 V5 a1.5 1.5 0 0 1 3 0 V9 V3 a1.5 1.5 0 0 1 3 0 V9 V2.5 a1.5 1.5 0 0 1 3 0 V9 V4 a1.5 1.5 0 0 1 3 0 V13 C15 17 13 19 9.5 19 C6 19 4 17 2 14 L0.8 11.5 a1.3 1.3 0 0 1 2.2 -1.2 Z" fill="#f3cd72" stroke="#2a2012" stroke-width="1"/></svg>
<svg class="a" style="left:38px;top:126px" width="7" height="4" viewBox="0 0 7 4"><path d="M0 0H7L3.5 4Z" fill="#aaa"/></svg>
<svg class="a" style="left:68px;top:128px" width="14" height="16" viewBox="0 0 18 20"><path d="M3 11 V5 a1.5 1.5 0 0 1 3 0 V9 V3 a1.5 1.5 0 0 1 3 0 V9 V2.5 a1.5 1.5 0 0 1 3 0 V9 V4 a1.5 1.5 0 0 1 3 0 V13 C15 17 13 19 9.5 19 C6 19 4 17 2 14 L0.8 11.5 a1.3 1.3 0 0 1 2.2 -1.2 Z" fill="#eee" stroke="#222" stroke-width="1"/></svg>
<svg class="a" style="left:84px;top:134px" width="6" height="4" viewBox="0 0 7 4"><path d="M0 0H7L3.5 4Z" fill="#ccc"/></svg>
<div class="a" style="left:107px;top:146px;width:38px;height:2px;background:#3a78d0"></div>
<svg class="a" style="left:140px;top:128px" width="9" height="14" viewBox="0 0 9 14"><path d="M1 5 L4.5 1 L8 5Z M1 9 L4.5 13 L8 9Z" fill="#555"/></svg>
<div class="a" style="left:150px;top:124px;width:13px;height:23px;background:#484848"></div>
<svg class="a" style="left:151px;top:129px" width="11" height="7" viewBox="0 0 11 7"><path d="M0 0H11L5.5 6Z" fill="#eee"/></svg>
<svg class="a" style="left:184px;top:128px" width="15" height="15" viewBox="0 0 15 15"><path d="M9 9 L14 14" stroke="#ddd" stroke-width="2"/><circle cx="6" cy="6" r="5" fill="#222" stroke="#e8e8e8" stroke-width="1.6"/><rect x="3.2" y="5.2" width="5.6" height="1.8" fill="#eee"/></svg>
<svg class="a" style="left:211px;top:128px" width="15" height="15" viewBox="0 0 15 15"><path d="M9 9 L14 14" stroke="#ddd" stroke-width="2"/><circle cx="6" cy="6" r="5" fill="#222" stroke="#e8e8e8" stroke-width="1.6"/><rect x="3.2" y="5.2" width="5.6" height="1.8" fill="#eee"/><rect x="5.1" y="3.2" width="1.8" height="5.6" fill="#eee"/></svg>
<svg class="a" style="left:260px;top:128px" width="15" height="15" viewBox="0 0 15 15"><circle cx="7.5" cy="7.5" r="6.2" fill="#222" stroke="#e8e8e8" stroke-width="1.8"/><rect x="4" y="6.5" width="7" height="2" fill="#eee"/></svg>
<svg class="a" style="left:289px;top:128px" width="15" height="15" viewBox="0 0 15 15"><circle cx="7.5" cy="7.5" r="6.2" fill="#222" stroke="#e8e8e8" stroke-width="1.8"/><rect x="4" y="6.5" width="7" height="2" fill="#eee"/><rect x="6.5" y="4" width="2" height="7" fill="#eee"/></svg>
<svg class="a" style="left:330px;top:129px" width="15" height="15" viewBox="0 0 15 15"><rect x="0.5" y="0.5" width="14" height="14" rx="2" fill="#f4f4f4" stroke="#222"/><text x="7.5" y="11" font-family="Liberation Sans" font-weight="700" font-size="7" text-anchor="middle" fill="#222">1:1</text></svg>
<div class="a" style="left:400px;top:133px;width:7px;height:5px;background:#444"></div>
<svg class="a" style="left:424px;top:129px" width="15" height="15" viewBox="0 0 15 15"><rect x="0.5" y="0.5" width="14" height="14" rx="2" fill="#f4f4f4" stroke="#222"/><path d="M7.5 2.5 L5.5 4.5 H9.5 Z M7.5 12.5 L5.5 10.5 H9.5 Z M2.5 7.5 L4.5 5.5 V9.5 Z M12.5 7.5 L10.5 5.5 V9.5 Z" fill="#222"/></svg>
<svg class="a" style="left:453px;top:129px" width="13" height="11" viewBox="0 0 13 11"><rect x="0" y="0" width="5.5" height="4.5" fill="#555"/><rect x="7" y="0" width="5.5" height="4.5" fill="#555"/><rect x="0" y="6" width="5.5" height="4.5" fill="#555"/><rect x="7" y="6" width="5.5" height="4.5" fill="#555"/></svg>
<!-- tab -->
<svg class="a" style="left:56px;top:161px" width="8" height="10" viewBox="0 0 8 10"><path d="M6 1 L2 5 L6 9" stroke="#aaa" stroke-width="1.3" fill="none"/></svg>
<svg class="a" style="left:354px;top:162px" width="11" height="10" viewBox="0 0 11 10"><path d="M1 0.5 L10 9.5 M10 0.5 L1 9.5" stroke="#ddd" stroke-width="1.8"/></svg>
<svg class="a" style="left:1628px;top:161px" width="8" height="10" viewBox="0 0 8 10"><path d="M2 1 L6 5 L2 9" stroke="#aaa" stroke-width="1.3" fill="none"/></svg>
<!-- mnemonic --><div class="a" style="left:15.4px;top:66px;width:7px;height:1px;background:#9a9a9a"></div><div class="a" style="left:42.2px;top:66px;width:7px;height:1px;background:#9a9a9a"></div><div class="a" style="left:70.9px;top:66px;width:8px;height:1px;background:#9a9a9a"></div><div class="a" style="left:105.4px;top:66px;width:3px;height:1px;background:#9a9a9a"></div><div class="a" style="left:147.75px;top:66px;width:8px;height:1px;background:#9a9a9a"></div><div class="a" style="left:214px;top:66px;width:4px;height:1px;background:#9a9a9a"></div><div class="a" style="left:235.3px;top:66px;width:6px;height:1px;background:#9a9a9a"></div><div class="a" style="left:277px;top:66px;width:9px;height:1px;background:#9a9a9a"></div><div class="a" style="left:327.2px;top:66px;width:7px;height:1px;background:#9a9a9a"></div><div class="a" style="left:390.4px;top:66px;width:11px;height:1px;background:#9a9a9a"></div><div class="a" style="left:443.8px;top:66px;width:8px;height:1px;background:#9a9a9a"></div><div class="a" style="left:490px;top:66px;width:7px;height:1px;background:#9a9a9a"></div><div class="a" style="left:571.5px;top:66px;width:7px;height:1px;background:#9a9a9a"></div><div class="a" style="left:626.6px;top:66px;width:8px;height:1px;background:#9a9a9a"></div>

<!-- left tools -->
<div class="a" style="left:0;top:72px;width:8px;height:983px;background:#272727"></div>
<svg class="a" style="left:10px;top:148px" width="21" height="21" viewBox="0 0 21 21"><path d="M1.5 1.5 L16 6 L11.5 9.5 L19.5 17.5 L17 20 L9 12 L5.5 16.5 Z" fill="#f4f4f4" stroke="#111" stroke-width="1"/></svg>
<svg class="a" style="left:11px;top:181px" width="20" height="18" viewBox="0 0 20 18"><rect x="1.2" y="1.2" width="17.5" height="15.5" fill="none" stroke="#e4e4e4" stroke-width="2" stroke-dasharray="3.5 2.5"/></svg>
<svg class="a" style="left:11px;top:211px" width="19" height="19" viewBox="0 0 19 19"><path d="M2 17 L3 13 L11 5 L14 8 L6 16 Z" fill="#d0d8dc" stroke="#222" stroke-width="0.8"/><path d="M11 4 L14 1.5 a2 2 0 0 1 3 3 L15 8 Z" fill="#6a7c90" stroke="#111" stroke-width="0.8"/></svg>
<svg class="a" style="left:11px;top:243px" width="18" height="19" viewBox="0 0 18 19"><path d="M4 0 V14 H18 M0 4 H14 V19" stroke="#f0f0f0" stroke-width="2.2" fill="none"/></svg>
<svg class="a" style="left:11px;top:274px" width="19" height="19" viewBox="0 0 19 19"><path d="M1 6 L15 1 L18 12 L4 17 Z" fill="#4a84b8" stroke="#d8e2ea" stroke-width="1.3"/><circle cx="10" cy="8" r="1.6" fill="#eee"/><path d="M7 13 a3 3 0 0 1 6 -2 Z" fill="#eee"/></svg>
<svg class="a" style="left:10px;top:306px" width="20" height="14" viewBox="0 0 20 14"><path d="M1 7 C5 1 15 1 19 7 C15 13 5 13 1 7 Z" fill="#f4f4f4" stroke="#111" stroke-width="0.8"/><circle cx="10" cy="7" r="3.6" fill="#c83a2a"/><circle cx="10" cy="7" r="1.5" fill="#601810"/></svg>
<svg class="a" style="left:11px;top:336px" width="20" height="18" viewBox="0 0 20 18"><rect x="1" y="1" width="13" height="2.5" fill="#b8c868"/><rect x="1" y="14.5" width="13" height="2.5" fill="#b8c868"/><path d="M7 5 V11 M4.5 8.5 L7 11.5 L9.5 8.5" stroke="#f4f4f4" stroke-width="1.8" fill="none"/><rect x="14.5" y="1" width="3" height="13" fill="#d0b060"/><path d="M13 13 L19 13 L16 18 Z" fill="#b03030"/></svg>
<svg class="a" style="left:10px;top:366px" width="21" height="19" viewBox="0 0 21 19"><path d="M20 1 L9 11 L11 13 L20.5 3 Z" fill="#e8d068" stroke="#222" stroke-width="0.6"/><path d="M9 10.5 C5 10 2 14 1.5 18.5 C6 18 10 15 11.5 13 Z" fill="#c0503a" stroke="#222" stroke-width="0.6"/></svg>
<svg class="a" style="left:11px;top:397px" width="20" height="20" viewBox="0 0 20 20"><defs><linearGradient id="gg" x1="0" y1="0" x2="1" y2="0.3"><stop offset="0" stop-color="#555"/><stop offset="1" stop-color="#f4f4f4"/></linearGradient></defs><rect x="1" y="1" width="18" height="18" fill="url(#gg)" stroke="#111"/></svg>
<svg class="a" style="left:11px;top:427px" width="20" height="21" viewBox="0 0 20 21"><path d="M7 11 L16 2 L19 5 L10 14 Z" fill="#f0e070" stroke="#222" stroke-width="0.7"/><path d="M16 2 L18 0.5 L19.5 2.5 L19 5 Z" fill="#d8c050"/><path d="M3 15 L7 11 L10 14 L6 18 C4 20 1 17 3 15 Z" fill="#d02a2a" stroke="#222" stroke-width="0.7"/></svg>
<svg class="a" style="left:10px;top:461px" width="20" height="19" viewBox="0 0 20 19"><ellipse cx="12" cy="10" rx="7" ry="8" fill="#d4d4d4" stroke="#222" stroke-width="0.8"/><ellipse cx="12" cy="7" rx="5" ry="4" fill="#444"/><path d="M1 12 C2 7 9 6 12 9 C12 14 8 17 4 16 C2 15.5 1 14 1 12 Z" fill="#e8dc40"/></svg>
<svg class="a" style="left:10px;top:490px" width="20" height="21" viewBox="0 0 20 21"><path d="M11 9 L16 4" stroke="#e8e8e8" stroke-width="3"/><circle cx="16.5" cy="3.5" r="2.5" fill="#e0e0e0"/><circle cx="8" cy="13" r="6.5" fill="#e02828" stroke="#3a0808" stroke-width="0.8"/></svg>
<svg class="a" style="left:11px;top:521px" width="19" height="21" viewBox="0 0 19 21"><path d="M1 1 H18 V6 H16.5 L15.5 3.2 H11 V18 L13.5 19 V20 H5.5 V19 L8 18 V3.2 H3.5 L2.5 6 H1 Z" fill="#d6dde2" stroke="#222" stroke-width="0.7"/></svg>
<svg class="a" style="left:11px;top:552px" width="18" height="21" viewBox="0 0 18 21"><path d="M12 1 L4 10 H9 L3 20 L15 8 H10 L15 1 Z" fill="#f4f4f4" stroke="#111" stroke-width="0.8"/></svg>
<svg class="a" style="left:10px;top:585px" width="21" height="17" viewBox="0 0 21 17"><ellipse cx="10.5" cy="8.5" rx="9.5" ry="7.2" fill="#c4a6d8" stroke="#111" stroke-width="1"/></svg>
<svg class="a" style="left:11px;top:613px" width="19" height="21" viewBox="0 0 19 21"><path d="M18 1 L9 10" stroke="#eee" stroke-width="1"/><path d="M17 2 L8 11 L10 13 L19 4 Z" fill="#111"/><path d="M2 19 L4 12 L8 9.5 L11 12.5 L8.5 16.5 Z" fill="#c8d840" stroke="#222" stroke-width="0.6"/></svg>
<svg class="a" style="left:9px;top:645px" width="22" height="20" viewBox="0 0 22 20"><path d="M2 1 L5 1 L9 8 L7 18 L4 18 L5 9 Z" fill="#f0f0f0" stroke="#222" stroke-width="0.6"/><path d="M21 2 L12 12 L14 14 L21.5 5 Z" fill="#e0d070" stroke="#222" stroke-width="0.6"/><path d="M12 11 C8 11 6 15 7 19 C11 18 14 16 14.5 14 Z" fill="#c0503a"/></svg>
<svg class="a" style="left:11px;top:677px" width="20" height="19" viewBox="0 0 20 19"><path d="M12 9 L17 2 L20 1 L19.5 5 L14 11 Z" fill="#e8e8e8" stroke="#222" stroke-width="0.6"/><path d="M10 8 L15 12" stroke="#888" stroke-width="3"/><path d="M2 15 L9 8 L13 12 L6 18 C4 19.5 1 17 2 15 Z" fill="#d86a48" stroke="#222" stroke-width="0.6"/></svg>
<svg class="a" style="left:13px;top:707px" width="21" height="21" viewBox="0 0 21 21"><circle cx="10.5" cy="10.5" r="9.2" fill="#222" stroke="#eee" stroke-width="1.8"/><path d="M10.5 4.5 V16.5 M4.5 10.5 H16.5" stroke="#eee" stroke-width="2"/></svg>
<svg class="a" style="left:0;top:0" width="52" height="740" viewBox="0 0 52 740"><g fill="#b4b4b4"><path d="M38.5 157 h5.5 l-2.75 3z"/><path d="M38.5 188 h5.5 l-2.75 3z"/><path d="M38.5 282 h5.5 l-2.75 3z"/><path d="M38.5 312 h5.5 l-2.75 3z"/><path d="M38.5 343 h5.5 l-2.75 3z"/><path d="M38.5 374 h5.5 l-2.75 3z"/><path d="M38.5 406 h5.5 l-2.75 3z"/><path d="M38.5 437 h5.5 l-2.75 3z"/><path d="M38.5 468 h5.5 l-2.75 3z"/><path d="M38.5 592 h5.5 l-2.75 3z"/><path d="M38.5 654 h5.5 l-2.75 3z"/><path d="M38.5 685 h5.5 l-2.75 3z"/></g></svg>

<!-- panel -->
<div class="a" style="left:1914px;top:150px;width:6px;height:905px;background:#282828"></div>
<svg class="a" style="left:1859px;top:159px" width="12" height="11" viewBox="0 0 12 11"><rect x="1" y="1" width="10" height="9" fill="none" stroke="#ddd" stroke-width="1.6"/><rect x="1" y="1" width="10" height="2" fill="#ddd"/></svg>
<svg class="a" style="left:1875px;top:162px" width="7" height="4" viewBox="0 0 7 4"><path d="M0 0H7L3.5 4Z" fill="#ccc"/></svg>
<svg class="a" style="left:1888px;top:158px" width="9" height="12" viewBox="0 0 9 12"><path d="M2 1H7V6H8V7.5H1V6H2Z M4.5 7.5V11.5" stroke="#ddd" stroke-width="1.2" fill="#ddd"/></svg>
<svg class="a" style="left:1901px;top:159px" width="11" height="11" viewBox="0 0 11 11"><path d="M1 1L10 10M10 1L1 10" stroke="#e6e6e6" stroke-width="1.8"/></svg>
<div class="a" style="left:1653px;top:178px;width:75px;height:22px;background:linear-gradient(90deg,#3a3a3a,#484848 40%,#454545 70%,#3c3c3c)"></div>
<svg class="a" style="left:1720px;top:187px" width="7" height="4" viewBox="0 0 7 4"><path d="M0 0H7L3.5 4Z" fill="#ccc"/></svg>
<div class="a" style="left:1734px;top:177px;width:55px;height:24px;background:#fff;border:1px solid #1a1a1a"></div>
<div class="a" style="left:1735px;top:178px;width:40px;height:22px;background-image:linear-gradient(45deg,#cfcfcf 25%,transparent 25%,transparent 75%,#cfcfcf 75%),linear-gradient(45deg,#cfcfcf 25%,transparent 25%,transparent 75%,#cfcfcf 75%);background-size:6px 6px;background-position:0 0,3px 3px;-webkit-mask-image:linear-gradient(90deg,#000,transparent);mask-image:linear-gradient(90deg,#000 20%,transparent)"></div>
<!-- layer buttons -->
<svg class="a" style="left:1655px;top:215px" width="20" height="21" viewBox="0 0 20 21"><rect x="0.5" y="0.5" width="19" height="17" fill="#3cb4e6"/><path d="M10 2 L4 9 H8 V20 H12 V9 H16 Z" fill="#111" stroke="#eee" stroke-width="0.6"/></svg>
<svg class="a" style="left:1685px;top:215px" width="20" height="21" viewBox="0 0 20 21"><rect x="0.5" y="0.5" width="19" height="6" fill="#3cb4e6"/><rect x="5" y="6" width="10" height="5" fill="#3cb4e6"/><path d="M8 2 V12 H3 L10 20 L17 12 H12 V2 Z" fill="#111" stroke="#ddd" stroke-width="0.8"/></svg>
<svg class="a" style="left:1716px;top:216px" width="18" height="20" viewBox="0 0 18 20"><text x="1" y="13" font-family="Liberation Serif" font-style="italic" font-weight="700" font-size="15" fill="#f0f0f0">f</text><ellipse cx="11" cy="14" rx="6.5" ry="4" fill="#e8e8e8" stroke="#222" stroke-width="0.6"/><circle cx="11" cy="14" r="2" fill="#8a9a70"/></svg>
<svg class="a" style="left:1745px;top:216px" width="20" height="20" viewBox="0 0 20 20"><path d="M1 4V1H4M1 15V18H4M14 18H17V15" stroke="#ddd" stroke-width="1.3" fill="none" stroke-dasharray="2 1"/><path d="M19 1 L8 14 L10 16 L19.5 4 Z" fill="#e0b868"/><path d="M8 13 C5 13 3 16 3.5 19 C7 18.5 10 17 10.5 15.5 Z" fill="#b85a3a"/></svg>
<svg class="a" style="left:1777px;top:216px" width="16" height="19" viewBox="0 0 16 19"><rect x="0.5" y="0.5" width="15" height="18" rx="1.5" fill="#555"/><text x="4" y="14" font-family="Liberation Serif" font-style="italic" font-size="13" fill="#444">f</text></svg>
<svg class="a" style="left:1809px;top:216px" width="21" height="20" viewBox="0 0 21 20"><path d="M8 12 L13 7" stroke="#eee" stroke-width="2"/><rect x="1.5" y="10" width="9" height="6" rx="3" transform="rotate(-45 6 13)" fill="none" stroke="#eee" stroke-width="2.2"/><rect x="10.5" y="4" width="9" height="6" rx="3" transform="rotate(-45 15 7)" fill="none" stroke="#eee" stroke-width="2.2"/></svg>
<svg class="a" style="left:1841px;top:216px" width="17" height="20" viewBox="0 0 17 20"><path d="M4 9 V6 a4.5 4.5 0 0 1 9 0 V9" stroke="#ddd" stroke-width="2" fill="none"/><rect x="1" y="9" width="15" height="10" fill="#f0c040" stroke="#222" stroke-width="0.8"/><rect x="7.5" y="12" width="2" height="4" fill="#222"/></svg>
<svg class="a" style="left:1874px;top:216px" width="20" height="20" viewBox="0 0 20 20"><circle cx="11.5" cy="11.5" r="7.5" fill="#3a7ab0" stroke="#8ac0e8" stroke-width="1.2"/><circle cx="10" cy="10" r="3" fill="#9ad0f0" opacity="0.6"/><path d="M3 3 L8 8" stroke="#ddd" stroke-width="1.2"/><circle cx="3" cy="3" r="2" fill="#ddd"/></svg>
<!-- layer list -->
<div class="a" style="left:1658px;top:241px;width:256px;height:64px;background:#2b93f3"></div>
<div class="a" style="left:1659px;top:305px;width:254px;height:63px;background:#383838"></div>
<div class="a" style="left:1659px;top:369px;width:254px;height:62px;background:#3a3a3a"></div>
<svg class="a" style="left:1661px;top:252px" width="18" height="18" viewBox="0 0 18 18"><rect x="5" y="1" width="11" height="11" fill="#e8e8e8" stroke="#112" stroke-width="1"/><rect x="2" y="4" width="11" height="12" fill="#f0f0f0" stroke="#112" stroke-width="1"/><path d="M5 10 L9 13" stroke="#222" stroke-width="1"/></svg>
<svg class="a" style="left:1660px;top:278px" width="17" height="17" viewBox="0 0 17 17"><rect x="1" y="1" width="15" height="15" fill="#ddd" stroke="#112" stroke-width="1"/><path d="M2 8.5 C5 4 12 4 15 8.5 C12 13 5 13 2 8.5Z" fill="#fff" stroke="#111" stroke-width="1.2"/><circle cx="8.5" cy="8.5" r="2.4" fill="#111"/></svg>
<svg class="a" style="left:1661px;top:316px" width="18" height="18" viewBox="0 0 18 18"><rect x="5" y="1" width="11" height="11" fill="#e0e0e0" stroke="#112" stroke-width="1"/><rect x="2" y="4" width="11" height="12" fill="#eee" stroke="#112" stroke-width="1"/><path d="M5 10 L9 13" stroke="#222" stroke-width="1"/></svg>
<svg class="a" style="left:1660px;top:342px" width="17" height="17" viewBox="0 0 17 17"><rect x="1" y="1" width="15" height="15" fill="#ddd" stroke="#112" stroke-width="1"/><path d="M2 8.5 C5 4 12 4 15 8.5 C12 13 5 13 2 8.5Z" fill="#fff" stroke="#111" stroke-width="1.2"/><circle cx="8.5" cy="8.5" r="2.4" fill="#111"/></svg>
<svg class="a" style="left:1661px;top:379px" width="18" height="18" viewBox="0 0 18 18"><rect x="5" y="1" width="11" height="11" fill="#e0e0e0" stroke="#112" stroke-width="1"/><rect x="2" y="4" width="11" height="12" fill="#eee" stroke="#112" stroke-width="1"/><path d="M5 10 L9 13" stroke="#222" stroke-width="1"/></svg>
<svg class="a" style="left:1660px;top:405px" width="17" height="17" viewBox="0 0 17 17"><rect x="1" y="1" width="15" height="15" fill="#ddd" stroke="#112" stroke-width="1"/><path d="M2 8.5 C5 4 12 4 15 8.5 C12 13 5 13 2 8.5Z" fill="#fff" stroke="#111" stroke-width="1.2"/><circle cx="8.5" cy="8.5" r="2.4" fill="#111"/></svg>
<!-- thumbs -->
<svg class="a" style="left:1683px;top:257px" width="56" height="32" viewBox="0 0 56 32"><defs><pattern id="chk" width="8" height="8" patternUnits="userSpaceOnUse"><rect width="8" height="8" fill="#fff"/><rect width="4" height="4" fill="#ccc"/><rect x="4" y="4" width="4" height="4" fill="#ccc"/></pattern></defs><rect width="56" height="32" fill="url(#chk)"/><path d="M22 6 C24 2 31 2 33 6 L34 14 L32 22 C36 24 37 28 37 32 L16 32 C16 28 18 24 22 22 Z" fill="#c08a60"/><path d="M22 6 C24 2 31 2 33 6 L31 12 L30 20 L24 24 L22 20 Z" fill="#14202a"/><path d="M20 26 L34 25 L35 32 L19 32 Z" fill="#1a1a2a"/></svg>
<svg class="a" style="left:1684px;top:321px" width="54" height="30" viewBox="0 0 54 30"><defs><linearGradient id="tsky" x1="0" y1="0" x2="0" y2="1"><stop offset="0" stop-color="#6aaee0"/><stop offset="0.5" stop-color="#d0e2ee"/><stop offset="0.85" stop-color="#e8ecef"/></linearGradient></defs><rect width="54" height="30" fill="url(#tsky)"/><rect y="26" width="54" height="4" fill="#2e56a0"/></svg>
<svg class="a" style="left:1684px;top:384px" width="54" height="31" viewBox="0 0 54 31"><rect width="54" height="31" fill="#3a88f2"/><path d="M21 6 C23 2 30 2 32 6 L33 14 L31 22 C35 24 36 28 36 31 L15 31 C15 28 17 24 21 22 Z" fill="#c08a60"/><path d="M21 6 C23 2 30 2 32 6 L30 12 L29 20 L23 24 L21 20 Z" fill="#14202a"/><path d="M19 25 L33 24 L34 31 L18 31 Z" fill="#1a1a2a"/></svg>
<!-- cursor -->
<svg class="a" style="left:1784px;top:280px" width="24" height="32" viewBox="0 0 24 32"><path d="M2 1.5 L2 23 L7.5 18 L12 28 L15.5 26.5 L11.2 16.8 L19 16.5 Z" fill="#fafafa" stroke="#1a2a40" stroke-width="1.3"/></svg>
<!-- bottom buttons -->
<svg class="a" style="left:1656px;top:1029px" width="20" height="20" viewBox="0 0 20 20"><rect x="5" y="1" width="14" height="14" fill="#b8dce0" stroke="#2a3a40"/><rect x="1" y="5" width="14" height="14" fill="#a8cfd4" stroke="#2a3a40"/></svg>
<svg class="a" style="left:1682px;top:1037px" width="7" height="4" viewBox="0 0 7 4"><path d="M0 0H7L3.5 4Z" fill="#aaa"/></svg>
<svg class="a" style="left:1697px;top:1029px" width="20" height="20" viewBox="0 0 20 20"><circle cx="10" cy="10" r="9" fill="#fff"/><path d="M3.6 16.4 A9 9 0 0 1 16.4 3.6 Z" fill="#111"/><circle cx="10" cy="10" r="9" fill="none" stroke="#111" stroke-width="1"/></svg>
<svg class="a" style="left:1724px;top:1037px" width="7" height="4" viewBox="0 0 7 4"><path d="M0 0H7L3.5 4Z" fill="#aaa"/></svg>
<svg class="a" style="left:1739px;top:1032px" width="20" height="14" viewBox="0 0 20 14"><path d="M1 4 C3 0 17 0 19 4 C20 9 16 13 13 12 C11 11 10.5 9 10 9 C9.5 9 9 11 7 12 C4 13 0 9 1 4 Z" fill="#e8e8e8"/><ellipse cx="6" cy="6" rx="2.5" ry="1.5" fill="#333"/><ellipse cx="14" cy="6" rx="2.5" ry="1.5" fill="#333"/></svg>
<svg class="a" style="left:1766px;top:1037px" width="7" height="4" viewBox="0 0 7 4"><path d="M0 0H7L3.5 4Z" fill="#aaa"/></svg>
<svg class="a" style="left:1781px;top:1029px" width="19" height="20" viewBox="0 0 19 20"><rect x="1" y="1" width="17" height="18" fill="#888" stroke="#ddd" stroke-width="1.5"/><rect x="3" y="3" width="6" height="7" fill="#444"/><rect x="10" y="3" width="6" height="7" fill="#ccc"/><rect x="3" y="11" width="6" height="6" fill="#777"/><rect x="10" y="11" width="6" height="6" fill="#333"/></svg>
<svg class="a" style="left:1812px;top:1029px" width="16" height="20" viewBox="0 0 16 20"><rect x="1" y="2.5" width="14" height="2.5" fill="#ccc"/><rect x="6" y="0.5" width="4" height="2" fill="#ccc"/><path d="M2.5 6 H13.5 L12.5 19 H3.5 Z" fill="#bbb"/><path d="M5.5 7.5 V17.5 M8 7.5 V17.5 M10.5 7.5 V17.5" stroke="#777" stroke-width="1"/></svg>
<svg class="a" style="left:1886px;top:1029px" width="19" height="19" viewBox="0 0 19 19"><rect x="1" y="1" width="17" height="17" rx="2" fill="#3a7ab8" stroke="#0b1a30"/><rect x="3" y="6" width="13" height="10" fill="#eef2f6"/><path d="M4 10 L7 13 L14 6" stroke="#c0203a" stroke-width="2.2" fill="none"/></svg>
<!-- status bar resize grip -->
<svg class="a" style="left:1906px;top:1066px" width="6" height="6" viewBox="0 0 6 6"><rect x="4" y="0" width="2" height="2" fill="#777"/><rect x="0" y="4" width="2" height="2" fill="#777"/><rect x="4" y="4" width="2" height="2" fill="#777"/></svg>


<span class="t" style="left:18.79px;top:12.94px;font-size:20.94px;font-weight:400;color:#ececec;transform:scaleX(0.9615);">Corel</span>
<span class="t" style="left:75.65px;top:11.40px;font-size:22.61px;font-weight:700;color:#ffffff;transform:scaleX(0.9545);">PaintShop</span>
<span class="t" style="left:186.09px;top:11.40px;font-size:22.61px;font-weight:700;color:#ffffff;transform:scaleX(0.9097);">Pro 2022</span>
<span class="t" style="left:275.05px;top:17.75px;font-size:16.3px;font-weight:400;color:#f0f0f0;transform:scaleX(0.9532);">ULTIMATE</span>
<span class="t" style="left:934.15px;top:14.70px;font-size:17.39px;font-weight:400;color:#d6d6d6;transform:scaleX(0.8525);">Manage</span>
<span class="t" style="left:1062.16px;top:14.70px;font-size:17.39px;font-weight:400;color:#fff3e6;transform:scaleX(0.8448);">Edit</span>
<span class="t" style="left:14.43px;top:52.97px;font-size:12.75px;font-weight:400;color:#dadada;transform:scaleX(0.9658);">File</span>
<span class="t" style="left:41.22px;top:52.97px;font-size:12.75px;font-weight:400;color:#dadada;transform:scaleX(0.9810);">Edit</span>
<span class="t" style="left:70.90px;top:52.97px;font-size:12.75px;font-weight:400;color:#dadada;transform:scaleX(0.9500);">View</span>
<span class="t" style="left:104.39px;top:52.97px;font-size:12.75px;font-weight:400;color:#dadada;transform:scaleX(1.0088);">Image</span>
<span class="t" style="left:147.75px;top:52.97px;font-size:12.75px;font-weight:400;color:#dadada;transform:scaleX(0.9736);">Adjust</span>
<span class="t" style="left:190.65px;top:52.97px;font-size:12.75px;font-weight:400;color:#dadada;transform:scaleX(0.9541);">Effects</span>
<span class="t" style="left:234.39px;top:52.97px;font-size:12.75px;font-weight:400;color:#dadada;transform:scaleX(0.9108);">Layers</span>
<span class="t" style="left:276.01px;top:52.97px;font-size:12.75px;font-weight:400;color:#dadada;transform:scaleX(0.9940);">Objects</span>
<span class="t" style="left:326.25px;top:52.97px;font-size:12.75px;font-weight:400;color:#dadada;transform:scaleX(0.9466);">Selections</span>
<span class="t" style="left:390.40px;top:52.97px;font-size:12.75px;font-weight:400;color:#dadada;transform:scaleX(0.9783);">Window</span>
<span class="t" style="left:442.79px;top:52.97px;font-size:12.75px;font-weight:400;color:#dadada;transform:scaleX(1.0120);">Help</span>
<span class="t" style="left:480.96px;top:52.97px;font-size:12.75px;font-weight:400;color:#dadada;transform:scaleX(0.9419);">Enhance Photo</span>
<span class="t" style="left:570.57px;top:52.97px;font-size:12.75px;font-weight:400;color:#dadada;transform:scaleX(0.9333);">Palettes</span>
<span class="t" style="left:625.64px;top:52.97px;font-size:12.75px;font-weight:400;color:#dadada;transform:scaleX(0.9570);">User Interface</span>
<span class="t" style="left:56.08px;top:108.14px;font-size:10.72px;font-weight:400;color:#c8c8c8;transform:scaleX(0.9189);">Presets:</span>
<span class="t" style="left:106.00px;top:108.14px;font-size:10.72px;font-weight:400;color:#c8c8c8;transform:scaleX(0.9818);">Zoom ( % ):</span>
<span class="t" style="left:180.00px;top:108.14px;font-size:10.72px;font-weight:400;color:#c8c8c8;transform:scaleX(0.9538);">Zoom out / in:</span>
<span class="t" style="left:256.00px;top:108.14px;font-size:10.72px;font-weight:400;color:#c8c8c8;transform:scaleX(0.9035);">Zoom more:</span>
<span class="t" style="left:325.70px;top:108.14px;font-size:10.72px;font-weight:400;color:#c8c8c8;transform:scaleX(0.8796);">Actual size:</span>
<span class="t" style="left:109.22px;top:128.00px;font-size:13.04px;font-weight:400;color:#e0e0e0;transform:scaleX(0.7750);">262</span>
<span class="t" style="left:93.14px;top:158.40px;font-size:13.7px;font-weight:400;color:#c4c4c4;transform:scaleX(0.8566);">aibackground-ultimate-2* @ 262% (Raster 2)</span>
<span class="t" style="left:8.72px;top:1058.10px;font-size:12.61px;font-weight:400;color:#d4d4d4;transform:scaleX(0.9809);">Pan Tool: Click and drag to pan images larger than the window.</span>
<span class="t" style="left:1665.06px;top:1058.07px;font-size:12.75px;font-weight:400;color:#d4d4d4;transform:scaleX(0.9414);">Image:  1055 x 593 x RGB - 8 bits/channel</span>
<span class="t" style="left:1658.00px;top:157.03px;font-size:13.77px;font-weight:400;color:#f2f2f2;transform:scaleX(1.0000);">Layers</span>
<span class="t" style="left:1667.38px;top:183.27px;font-size:10.58px;font-weight:400;color:#b4b4b4;transform:scaleX(1.0182);">Normal</span>
<span class="t" style="left:1760.04px;top:179.00px;font-size:10.43px;font-weight:400;color:#333333;transform:scaleX(0.9625);">100</span>
<span class="t" style="left:1739.14px;top:266.84px;font-size:11.59px;font-weight:400;color:#bfe0ff;transform:scaleX(0.8571);">Raster 2</span>
<span class="t" style="left:1739.14px;top:329.84px;font-size:11.59px;font-weight:400;color:#cfcfcf;transform:scaleX(0.8571);">Raster 1</span>
<span class="t" style="left:1739.14px;top:392.84px;font-size:11.59px;font-weight:400;color:#cfcfcf;transform:scaleX(0.8571);">Raster 1</span>
</body></html>
